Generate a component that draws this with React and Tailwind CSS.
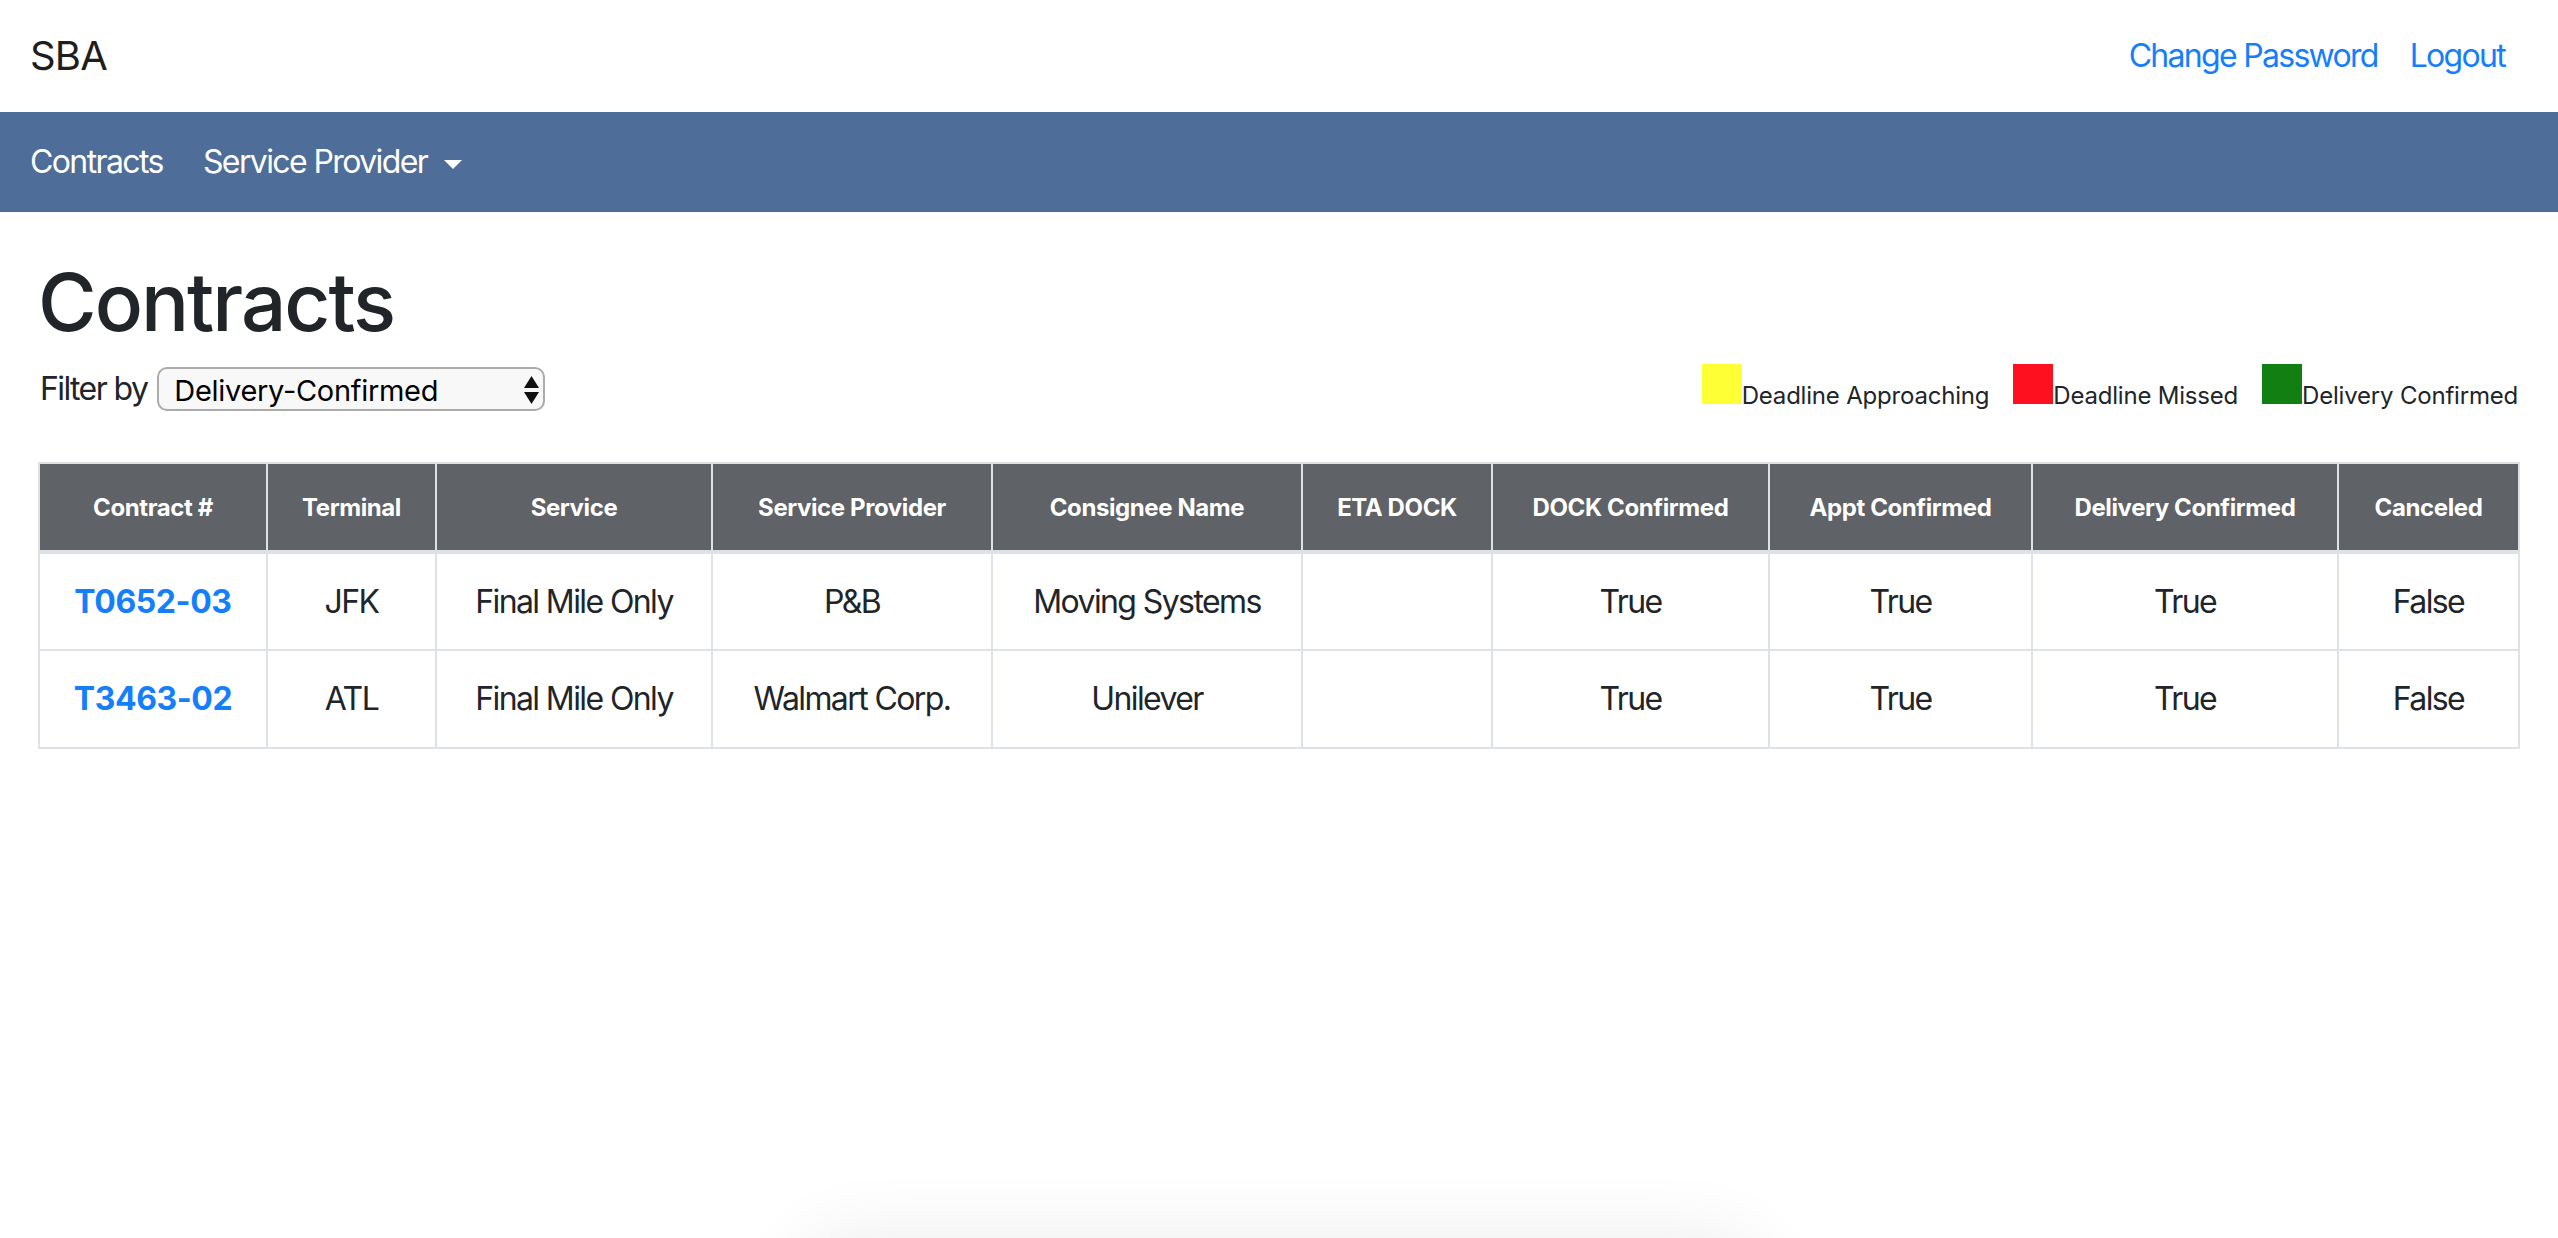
import { useState } from "react";

const columns = [
  { label: "Contract #", width: "w-[228px]" },
  { label: "Terminal", width: "w-[169px]" },
  { label: "Service", width: "w-[276px]" },
  { label: "Service Provider", width: "w-[280px]" },
  { label: "Consignee Name", width: "w-[310px]" },
  { label: "ETA DOCK", width: "w-[190px]" },
  { label: "DOCK Confirmed", width: "w-[277px]" },
  { label: "Appt Confirmed", width: "w-[263px]" },
  { label: "Delivery Confirmed", width: "w-[306px]" },
  { label: "Canceled", width: "w-[181px]" },
];

const contracts = [
  {
    id: "T0652-03",
    terminal: "JFK",
    service: "Final Mile Only",
    provider: "P&B",
    consignee: "Moving Systems",
    etaDock: "",
    dockConfirmed: "True",
    apptConfirmed: "True",
    deliveryConfirmed: "True",
    canceled: "False",
  },
  {
    id: "T3463-02",
    terminal: "ATL",
    service: "Final Mile Only",
    provider: "Walmart Corp.",
    consignee: "Unilever",
    etaDock: "",
    dockConfirmed: "True",
    apptConfirmed: "True",
    deliveryConfirmed: "True",
    canceled: "False",
  },
];

const legend = [
  { label: "Deadline Approaching", color: "bg-[#ffff36]" },
  { label: "Deadline Missed", color: "bg-[#fe101f]" },
  { label: "Delivery Confirmed", color: "bg-[#117f12]" },
];

const App = () => {
  const [filter, setFilter] = useState("Delivery-Confirmed");

  return (
    <div className="min-h-screen bg-white text-[#212529] font-['Inter','Noto_Sans',sans-serif]">
      {/* top bar */}
      <div className="h-[112px] flex items-center justify-between pl-[30px] pr-[53px]">
        <a href="#" className="text-[40px] leading-[60px] text-[#1e1e1e] tracking-[-0.8px]">
          SBA
        </a>
        <div className="flex items-center gap-[32px] text-[32px] leading-[48px] text-[#147efb] tracking-[-1.7px]">
          <a href="#">Change Password</a>
          <a href="#">Logout</a>
        </div>
      </div>

      {/* nav */}
      <nav className="h-[100px] bg-[#4e6d98] flex items-center pl-[30px] text-white text-[32px] leading-[48px] tracking-[-1.6px]">
        <a href="#">Contracts</a>
        <button className="ml-[40px] flex items-center">
          Service Provider
          <span className="ml-[17px] mt-[4px] w-0 h-0 border-l-[9px] border-r-[9px] border-t-[9px] border-l-transparent border-r-transparent border-t-white"></span>
        </button>
      </nav>

      <main className="pl-[38px] pr-[40px]">
        <h1 className="mt-[42px] text-[80px] leading-[96px] font-medium tracking-[-2px]">
          Contracts
        </h1>

        {/* Filter + legend */}
        <div className="mt-[15px] flex items-start justify-between">
          <div className="h-[48px] flex items-center">
            <span className="text-[32px] leading-[48px] tracking-[-1.6px] ml-[2px]">Filter by</span>
            <div className="relative ml-[10px]">
              <select
                value={filter}
                onChange={(e) => setFilter(e.target.value)}
                className="appearance-none w-[388px] h-[44px] rounded-[10px] border-2 border-[#ababab] bg-[#f8f8f8] pl-[15px] text-[29px] text-black tracking-[-0.3px] outline-none"
              >
                <option>All</option>
                <option>Deadline-Approaching</option>
                <option>Deadline-Missed</option>
                <option>Delivery-Confirmed</option>
              </select>
              <svg
                className="absolute right-[6px] top-[9px] pointer-events-none"
                width="15"
                height="28"
                viewBox="0 0 15 28"
              >
                <path d="M7.5 0 L15 12 L0 12 Z" fill="#111" />
                <path d="M0 16 L15 16 L7.5 28 Z" fill="#111" />
              </svg>
            </div>
          </div>

          <div className="-mt-[1px] text-[24px] leading-[36px] tracking-[-0.2px] whitespace-nowrap">
            {legend.map((item, i) => (
              <span key={item.label} className={i > 0 ? "ml-[24px]" : ""}>
                <span className={`inline-block w-[40px] h-[40px] ${item.color}`}></span>
                {item.label}
              </span>
            ))}
          </div>
        </div>

        {/* Contracts table */}
        <table className="mt-[48px] w-full table-fixed border-collapse border-2 border-[#dee2e6]">
          <colgroup>
            {columns.map((c) => (
              <col key={c.label} className={c.width} />
            ))}
          </colgroup>
          <thead>
            <tr className="bg-[#5f6266] text-white">
              {columns.map((c) => (
                <th
                  key={c.label}
                  className="border-2 border-b-4 border-[#dee2e6] h-[89px] px-[10px] text-[24px] leading-[35px] font-bold tracking-[-0.4px] text-center"
                >
                  {c.label}
                </th>
              ))}
            </tr>
          </thead>
          <tbody>
            {contracts.map((row) => (
              <tr key={row.id} className="text-[32px] leading-[48px] tracking-[-1.6px] text-center">
                <td className="border-2 border-[#dee2e6] h-[98px]">
                  <a href="#" className="font-bold text-[#147efb] tracking-[-0.4px]">
                    {row.id}
                  </a>
                </td>
                <td className="border-2 border-[#dee2e6]">{row.terminal}</td>
                <td className="border-2 border-[#dee2e6]">{row.service}</td>
                <td className="border-2 border-[#dee2e6]">{row.provider}</td>
                <td className="border-2 border-[#dee2e6]">{row.consignee}</td>
                <td className="border-2 border-[#dee2e6]">{row.etaDock}</td>
                <td className="border-2 border-[#dee2e6]">{row.dockConfirmed}</td>
                <td className="border-2 border-[#dee2e6]">{row.apptConfirmed}</td>
                <td className="border-2 border-[#dee2e6]">{row.deliveryConfirmed}</td>
                <td className="border-2 border-[#dee2e6]">{row.canceled}</td>
              </tr>
            ))}
          </tbody>
        </table>
      </main>

      {/* soft shadow of a panel sitting just below the viewport */}
      <div className="fixed left-[820px] top-[1262px] w-[920px] h-[120px] rounded-[40px] bg-white shadow-[0_0_70px_30px_rgba(0,0,0,0.07)]"></div>
    </div>
  );
};

export default App;
